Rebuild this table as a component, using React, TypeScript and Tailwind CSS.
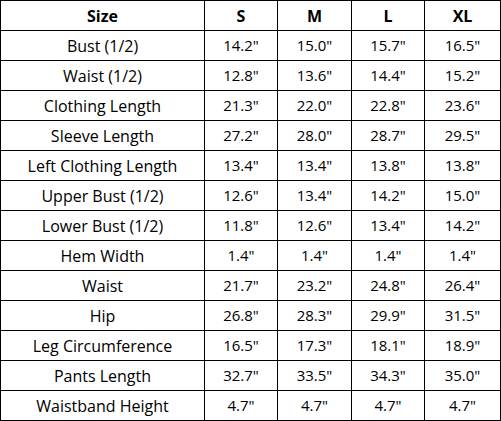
const headers = ["Size", "S", "M", "L", "XL"];

const rows: string[][] = [
  ["Bust (1/2)", '14.2"', '15.0"', '15.7"', '16.5"'],
  ["Waist (1/2)", '12.8"', '13.6"', '14.4"', '15.2"'],
  ["Clothing Length", '21.3"', '22.0"', '22.8"', '23.6"'],
  ["Sleeve Length", '27.2"', '28.0"', '28.7"', '29.5"'],
  ["Left Clothing Length", '13.4"', '13.4"', '13.8"', '13.8"'],
  ["Upper Bust (1/2)", '12.6"', '13.4"', '14.2"', '15.0"'],
  ["Lower Bust (1/2)", '11.8"', '12.6"', '13.4"', '14.2"'],
  ["Hem Width", '1.4"', '1.4"', '1.4"', '1.4"'],
  ["Waist", '21.7"', '23.2"', '24.8"', '26.4"'],
  ["Hip", '26.8"', '28.3"', '29.9"', '31.5"'],
  ["Leg Circumference", '16.5"', '17.3"', '18.1"', '18.9"'],
  ["Pants Length", '32.7"', '33.5"', '34.3"', '35.0"'],
  ["Waistband Height", '4.7"', '4.7"', '4.7"', '4.7"'],
];

export default function App() {
  return (
    <div className="w-[501px] h-[421px] bg-white">
      <div className="grid grid-cols-[203px_72px_73px_72px_75px] auto-rows-[29px] gap-px bg-black p-px font-['Open_Sans','Noto_Sans',sans-serif] text-[15px] text-black">
        {headers.map((h) => (
          <div key={h} className="bg-white flex items-center justify-center font-bold text-[16px]">
            {h}
          </div>
        ))}
        {rows.map((row) =>
          row.map((cell, i) => (
            <div
              key={row[0] + i}
              className={i === 0 ? "bg-white flex items-center justify-center text-[16px]" : "bg-white flex items-center justify-center"}
            >
              {cell}
            </div>
          ))
        )}
      </div>
    </div>
  );
}
